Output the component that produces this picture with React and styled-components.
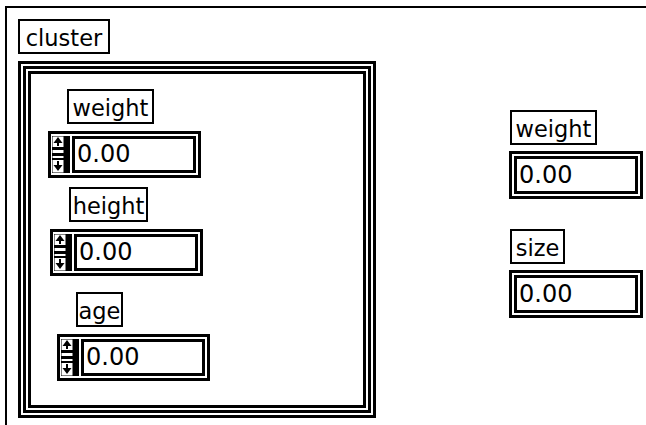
import React from "react";
import styled, { createGlobalStyle } from "styled-components";

const GlobalStyle = createGlobalStyle`
  html, body {
    margin: 0;
    padding: 0;
    background: #fff;
  }
  body {
    font-family: "DejaVu Sans", Verdana, sans-serif;
    color: #000;
    overflow: hidden;
  }
`;

// front panel: only the top and left edges of the window show
const Panel = styled.div`
  margin: 6px 0 0 5px;
  height: 430px;
  box-sizing: border-box;
  border-top: 2px solid #000;
  border-left: 2px solid #000;
  padding: 11px 0 0 11px;
  display: flex;
  align-items: flex-start;
`;

const LeftCol = styled.div`
  display: flex;
  flex-direction: column;
  align-items: flex-start;
`;

const RightCol = styled.div`
  display: flex;
  flex-direction: column;
  align-items: flex-start;
  margin: 91px 0 0 133px;
`;

const Label = styled.div`
  box-sizing: border-box;
  width: ${(p) => p.w}px;
  height: 35px;
  border: 2px solid #000;
  background: #fff;
  font-size: 22.5px;
  line-height: 35px;
  text-align: center;
  white-space: nowrap;
  margin-left: ${(p) => p.indent || 0}px;
`;

// triple-line cluster border
const Frame = styled.div`
  box-sizing: border-box;
  width: 358px;
  height: 357px;
  margin-top: 7px;
  border: 3px solid #000;
  box-shadow: inset 0 0 0 2px #fff, inset 0 0 0 5px #000,
    inset 0 0 0 7px #fff, inset 0 0 0 10px #000;
  padding-top: 25px;
  display: flex;
  flex-direction: column;
  align-items: flex-start;
`;

const Group = styled.div`
  display: flex;
  flex-direction: column;
  align-items: flex-start;
  margin-left: ${(p) => p.left || 0}px;
  margin-top: ${(p) => p.top || 0}px;
`;

const SpinControl = styled.div`
  box-sizing: border-box;
  width: ${(p) => p.w || 153}px;
  height: 47px;
  margin-top: 7px;
  border: 3px solid #000;
  padding: 2px 2px 2px 1px;
  display: flex;
  background: #fff;
`;

const Field = styled.div`
  flex: 1;
  margin-left: 2px;
  border: 3px solid #000;
  padding-left: 2px;
  font-size: 24px;
  line-height: 31px;
  white-space: nowrap;
`;

const Indicator = styled.div`
  box-sizing: border-box;
  width: 134px;
  height: 48px;
  margin-top: 6px;
  border: 3px solid #000;
  box-shadow: inset 0 0 0 2px #fff, inset 0 0 0 5px #000;
  padding-left: 7px;
  font-size: 24px;
  line-height: 42px;
  white-space: nowrap;
`;

const Spin = () => (
  <svg width="18" height="37" viewBox="0 0 18 37">
    <rect x="12" y="0" width="6" height="37" fill="#000" />
    <rect x="0" y="0" width="12" height="37" fill="none" stroke="#000" strokeWidth="1" />
    <polygon points="6,1 10.5,7 1.5,7" fill="#000" />
    <rect x="5" y="7" width="2" height="3" fill="#000" />
    <rect x="0" y="11" width="12" height="3" fill="#000" />
    <rect x="0" y="17" width="12" height="3" fill="#000" />
    <rect x="0" y="22" width="12" height="2" fill="#000" />
    <rect x="5" y="25" width="2" height="4" fill="#000" />
    <polygon points="1.5,29 10.5,29 6,35" fill="#000" />
  </svg>
);

const controls = [
  { name: "weight", w: 87, left: 27, top: 0 },
  { name: "height", w: 79, left: 29, top: 9 },
  { name: "age", w: 47, left: 36, top: 16 },
];

const indicators = [
  { name: "weight", w: 87, top: 0 },
  { name: "size", w: 55, top: 30 },
];

export default function App() {
  return (
    <>
      <GlobalStyle />
      <Panel>
        <LeftCol>
          <Label w={92}>cluster</Label>
          <Frame>
            {controls.map((c) => (
              <Group key={c.name} left={c.left} top={c.top}>
                <Label w={c.w} indent={19}>
                  {c.name}
                </Label>
                <SpinControl>
                  <Spin />
                  <Field>0.00</Field>
                </SpinControl>
              </Group>
            ))}
          </Frame>
        </LeftCol>
        <RightCol>
          {indicators.map((c) => (
            <Group key={c.name} top={c.top}>
              <Label w={c.w} indent={1}>
                {c.name}
              </Label>
              <Indicator>0.00</Indicator>
            </Group>
          ))}
        </RightCol>
      </Panel>
    </>
  );
}
